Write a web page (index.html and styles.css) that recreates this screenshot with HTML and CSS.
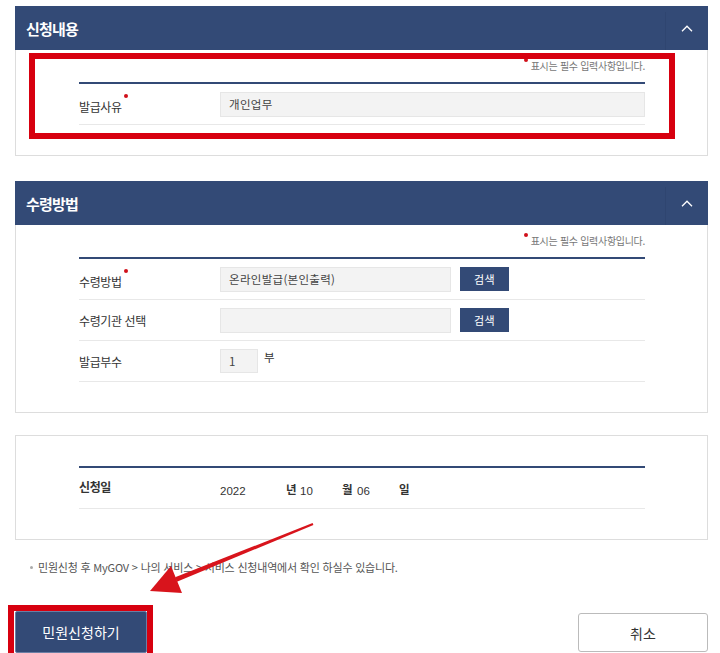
FILE: index.html
```html
<!DOCTYPE html>
<html lang="ko">
<head>
  <meta charset="UTF-8">
  <title>민원신청</title>
  <link rel="stylesheet" href="styles.css">
</head>
<body>
  <div class="wrap">

    <!-- 신청내용 -->
    <div class="panel">
      <div class="panel-head">
        <h3 class="panel-title">신청내용</h3>
        <span class="panel-toggle">
          <svg width="12" height="7" viewBox="0 0 12 7"><polyline points="1,6.2 6,1.2 11,6.2" fill="none" stroke="#fff" stroke-width="1.3"/></svg>
        </span>
      </div>
      <div class="panel-body">
        <p class="req-note"><span class="req"></span>표시는 필수 입력사항입니다.</p>
        <div class="form-table">
          <div class="form-row">
            <div class="form-label">발급사유<span class="req"></span></div>
            <div class="form-value">
              <input type="text" class="inp inp-full" value="개인업무" readonly>
            </div>
          </div>
        </div>
      </div>
      <div class="highlight"></div>
    </div>

    <!-- 수령방법 -->
    <div class="panel">
      <div class="panel-head">
        <h3 class="panel-title">수령방법</h3>
        <span class="panel-toggle">
          <svg width="12" height="7" viewBox="0 0 12 7"><polyline points="1,6.2 6,1.2 11,6.2" fill="none" stroke="#fff" stroke-width="1.3"/></svg>
        </span>
      </div>
      <div class="panel-body">
        <p class="req-note"><span class="req"></span>표시는 필수 입력사항입니다.</p>
        <div class="form-table">
          <div class="form-row">
            <div class="form-label">수령방법<span class="req"></span></div>
            <div class="form-value">
              <input type="text" class="inp inp-mid" value="온라인발급(본인출력)" readonly>
              <button class="btn-search">검색</button>
            </div>
          </div>
          <div class="form-row">
            <div class="form-label">수령기관 선택</div>
            <div class="form-value">
              <input type="text" class="inp inp-mid" value="" readonly>
              <button class="btn-search">검색</button>
            </div>
          </div>
          <div class="form-row">
            <div class="form-label">발급부수</div>
            <div class="form-value">
              <input type="text" class="inp inp-num" value="1" readonly>
              <span class="unit">부</span>
            </div>
          </div>
        </div>
      </div>
    </div>

    <!-- 신청일 -->
    <div class="panel panel-date">
      <div class="panel-body panel-body-top">
        <div class="form-table">
          <div class="form-row">
            <div class="form-label form-label-strong">신청일</div>
            <div class="form-value date-value">
              <span class="d-num d-year">2022</span><span class="d-unit">년</span><span class="d-num d-md">10</span><span class="d-unit d-unit-m">월</span><span class="d-num d-md">06</span><span class="d-unit">일</span>
            </div>
          </div>
        </div>
      </div>
    </div>

    <p class="info-note">민원신청 후 MyGOV &gt; 나의 서비스 &gt; 서비스 신청내역에서 확인 하실수 있습니다.</p>

    <div class="btn-area">
      <button class="btn-primary">민원신청하기</button>
      <button class="btn-cancel">취소</button>
    </div>
  </div>

  <!-- 안내 화살표 -->
  <svg class="arrow" width="720" height="653" viewBox="0 0 720 653">
    <polygon points="313.4,524.9 312.6,523.1 175.1,577.2 176.9,581.8" fill="#d8141c"/>
    <polygon points="150,591 171,566 182,593" fill="#d8141c"/>
  </svg>
</body>
</html>
```

FILE: styles.css
```css
/* 기본 */
body {
  margin: 0;
  font-family: "Noto Sans CJK KR", "Noto Sans", sans-serif;
  color: #333;
  background: #fff;
}

.wrap {
  padding: 6px 12px 0 15px;
}

/* 패널 */
.panel {
  position: relative;
  margin-bottom: 25px;
}

.panel:nth-child(2) {
  margin-bottom: 22px;
}

.panel-date {
  margin-bottom: 0;
}

.panel-head {
  display: flex;
  align-items: center;
  height: 44px;
  background-color: #334a76;
}

.panel-title {
  flex: 1;
  margin: 0;
  padding-left: 11px;
  font-size: 15px;
  font-weight: bold;
  letter-spacing: -0.8px;
  color: #fff;
}

.panel-toggle {
  display: flex;
  align-items: center;
  justify-content: center;
  width: 42px;
  height: 38px;
  margin-top: 6px;
  border-left: 1px solid #2f4570;
}

.panel-toggle svg {
  margin-top: -6px;
}

.panel-body {
  padding: 0 62px 30px 63px;
  border: 1px solid #ddd;
  border-top: none;
}

.panel-body-top {
  padding-top: 30px;
  border-top: 1px solid #ddd;
}

.req-note {
  margin: 0;
  height: 32px;
  line-height: 32px;
  text-align: right;
  font-size: 10px;
  letter-spacing: -0.3px;
  color: #777;
}

.req {
  display: inline-block;
  width: 4px;
  height: 4px;
  border-radius: 50%;
  background-color: #d0101a;
  vertical-align: 8px;
  margin-right: 3px;
}

/* 폼 테이블 */
.form-table {
  border-top: 2px solid #334a76;
}

.form-row {
  display: flex;
  align-items: center;
  box-sizing: border-box;
  height: 41px;
  border-bottom: 1px solid #e8e8e8;
}

.form-label {
  width: 141px;
  flex-shrink: 0;
  font-size: 12px;
  letter-spacing: -0.4px;
  color: #333;
}

.form-label .req {
  margin-left: 2px;
  vertical-align: 14px;
}

.form-label-strong {
  font-weight: bold;
  margin-top: -3px;
}

.form-value {
  flex: 1;
  display: flex;
  align-items: center;
}

.inp {
  box-sizing: border-box;
  height: 25px;
  padding: 0 8px;
  border: 1px solid #e6e6e6;
  background-color: #f3f3f3;
  font-family: "Noto Sans CJK KR", "Noto Sans", sans-serif;
  font-size: 11.5px;
  letter-spacing: 0.3px;
  color: #444;
  outline: none;
}

.inp-full {
  width: 100%;
}

.inp-mid {
  width: 231px;
}

.inp-num {
  width: 38px;
  height: 24px;
}

.unit {
  margin-left: 6px;
  font-size: 11.5px;
  margin-top: -8px;
}

.btn-search {
  width: 49px;
  height: 24px;
  margin-left: 9px;
  border: none;
  background-color: #334a76;
  color: #fff;
  font-family: "Noto Sans CJK KR", "Noto Sans", sans-serif;
  font-size: 11px;
  letter-spacing: 0.5px;
}

/* 신청일 */
.date-value {
  font-size: 11.5px;
  color: #333;
}

.d-num {
  display: inline-block;
  font-family: "Liberation Sans Narrow", "Liberation Sans", sans-serif;
  font-size: 11.5px;
  margin-top: 6px;
}

.d-year {
  width: 66px;
}

.d-md {
  width: 42px;
  padding-left: 1px;
}

.d-unit {
  display: inline-block;
  width: 13px;
  font-weight: bold;
  margin-top: 1px;
}

.d-unit-m {
  width: 14px;
}

/* 안내문구 */
.info-note {
  position: relative;
  margin: 20px 0 0 15px;
  padding-left: 8px;
  line-height: 14px;
  font-size: 11px;
  letter-spacing: -0.2px;
  color: #555;
}

.info-note::before {
  content: "";
  position: absolute;
  left: 0;
  top: 6px;
  width: 3px;
  height: 3px;
  border-radius: 50%;
  background: #aaa;
}

/* 버튼 */
.btn-area {
  display: flex;
  justify-content: space-between;
  margin-top: 37px;
}

.btn-primary {
  position: relative;
  width: 132px;
  height: 42px;
  border: 1px solid #6b7fa5;
  border-radius: 2px;
  background-color: #334a76;
  color: #fff;
  font-family: "Noto Sans CJK KR", "Noto Sans", sans-serif;
  font-size: 14px;
}

.btn-primary::after {
  content: "";
  position: absolute;
  top: -7px;
  left: -8px;
  right: -7px;
  bottom: -8px;
  border: 6px solid #d7000f;
}

.btn-cancel {
  width: 130px;
  height: 39px;
  margin-top: 2px;
  border: 1px solid #bbb;
  border-radius: 3px;
  background-color: #fff;
  color: #333;
  font-family: "Noto Sans CJK KR", "Noto Sans", sans-serif;
  font-size: 14px;
}

/* 표시 */
.highlight {
  position: absolute;
  top: 47px;
  left: 14px;
  width: 646px;
  height: 86px;
  box-sizing: border-box;
  border: 6px solid #d7000f;
}

.arrow {
  position: absolute;
  top: 0;
  left: 0;
  pointer-events: none;
}
```
